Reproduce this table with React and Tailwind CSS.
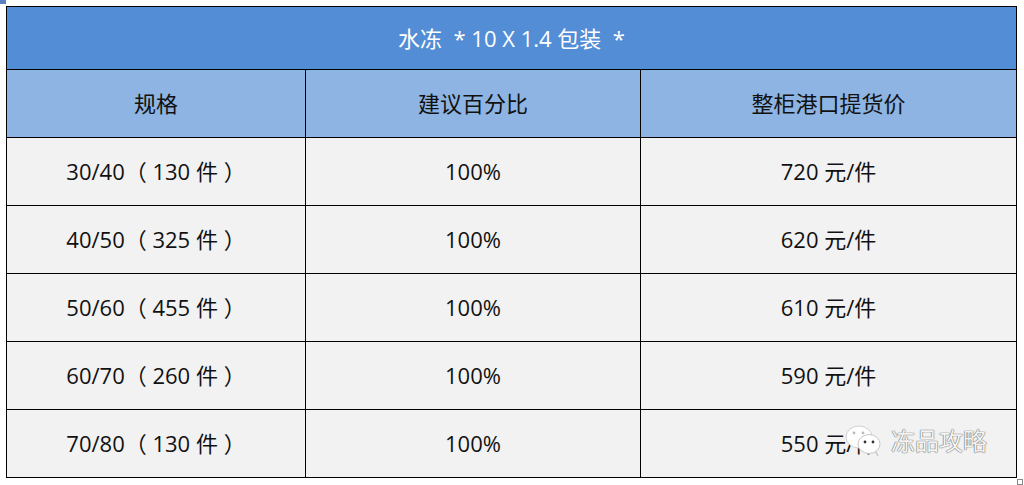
import React from "react";

const rows = [
  { spec: "30/40（ 130 件 ）", pct: "100%", price: "720 元/件" },
  { spec: "40/50（ 325 件 ）", pct: "100%", price: "620 元/件" },
  { spec: "50/60（ 455 件 ）", pct: "100%", price: "610 元/件" },
  { spec: "60/70（ 260 件 ）", pct: "100%", price: "590 元/件" },
  { spec: "70/80（ 130 件 ）", pct: "100%", price: "550 元/件" },
];

const WeChatMark = () => (
  <svg width="44" height="34" viewBox="0 0 44 34" fill="none">
    <ellipse cx="16" cy="13" rx="13" ry="11" fill="#ffffff" stroke="#d0d0d0" strokeWidth="1" />
    <circle cx="11" cy="9" r="1.4" fill="#bbbbbb" />
    <circle cx="20" cy="9" r="1.4" fill="#bbbbbb" />
    <ellipse cx="26" cy="20" rx="11" ry="9.5" fill="#ffffff" stroke="#c8c8c8" strokeWidth="1" />
    <circle cx="22" cy="18" r="1.4" fill="#333333" />
    <circle cx="30" cy="18" r="1.4" fill="#333333" />
    <path d="M32 28 L35 32 L33 27" fill="#ffffff" stroke="#c8c8c8" strokeWidth="1" />
  </svg>
);

export default function App() {
  return (
    <div
      className="w-[1024px] h-[485px] bg-white relative overflow-hidden"
      style={{ fontFamily: '"Open Sans", "Noto Sans CJK SC", sans-serif' }}
    >
      <div className="pt-[6px] pl-[6px]">
        <table className="border-collapse text-[22px] text-[#111]">
          <colgroup>
            <col className="w-[299px]" />
            <col className="w-[335px]" />
            <col className="w-[376px]" />
          </colgroup>
          <tbody>
            <tr className="h-[63px]">
              <td colSpan={3} className="border border-black bg-[#538dd5] text-white text-center">
                水冻 &nbsp;* 10 X 1.4 包装 &nbsp;*
              </td>
            </tr>
            <tr className="h-[68px] bg-[#8db4e2]">
              <td className="border border-black text-center">规格</td>
              <td className="border border-black text-center">建议百分比</td>
              <td className="border border-black text-center">整柜港口提货价</td>
            </tr>
            {rows.map((r) => (
              <tr key={r.spec} className="h-[68px] bg-[#f2f2f2]">
                <td className="border border-black text-center">{r.spec}</td>
                <td className="border border-black text-center">{r.pct}</td>
                <td className="border border-black text-center">{r.price}</td>
              </tr>
            ))}
          </tbody>
        </table>
      </div>
      <div className="absolute left-[843px] top-[423px] flex items-center gap-[4px]">
        <WeChatMark />
        <span
          className="text-[24px] text-[#f4f4f4]"
          style={{ textShadow: "0 0 1px #555, 0 0 1px #555" }}
        >
          冻品攻略
        </span>
      </div>
      <div className="absolute left-[1017px] top-[479px] w-[6px] h-[6px] border border-[#888]" />
      <div className="absolute left-0 top-0 w-[6px] h-[4px] bg-[#5b7fc0]" />
    </div>
  );
}
